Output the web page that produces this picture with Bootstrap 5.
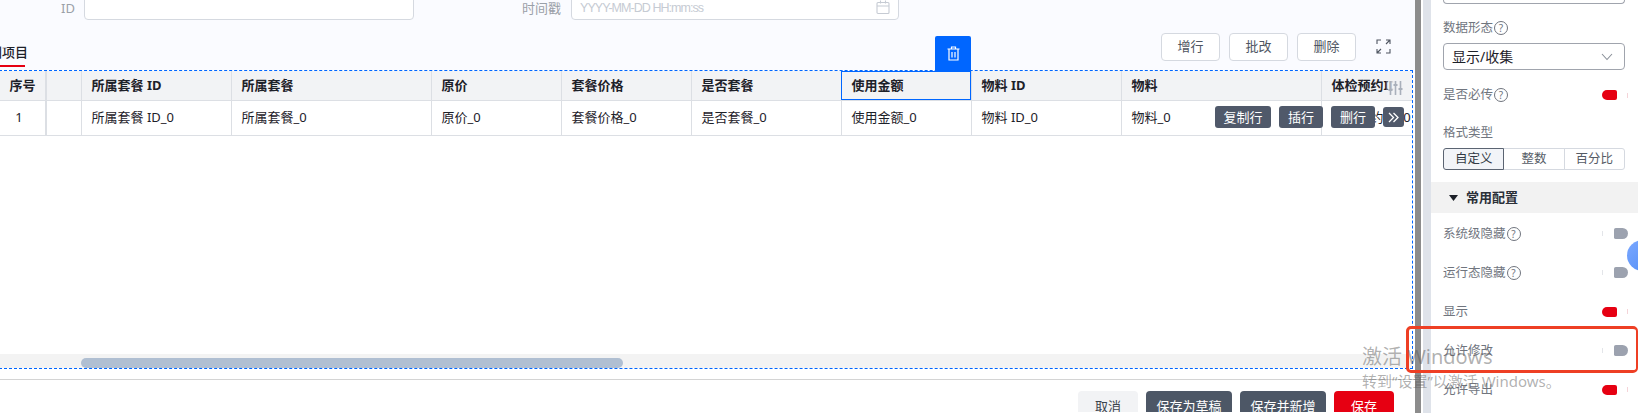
<!DOCTYPE html>
<html lang="zh-CN">
<head>
  <meta charset="UTF-8">
  <title>表单设计</title>
  <link href="https://cdn.jsdelivr.net/npm/bootstrap@5.3.0/dist/css/bootstrap.min.css" rel="stylesheet">
  <style>
    html, body { height: 413px; overflow: hidden; }
    body { font-family: "Noto Sans", "Noto Sans CJK SC", sans-serif; font-size: 13px; color: #1d2129; background: #fff; position: relative; }
    .page-wrap { height: 413px; overflow: hidden; }
    .main-area { width: 1415px; flex: none; position: relative; }
    .form-top { height: 70px; background: #fafbff; }
    .form-fields { height: 20px; overflow: hidden; align-items: flex-end; }
    .field-label { color: #9aa0a8; font-size: 13px; line-height: 16px; padding-bottom: 4px; text-align: right; }
    .field-label.lbl-id { width: 75px; margin-right: 9px; }
    .field-label.lbl-time { width: 73px; margin-left: 74px; margin-right: 10px; }
    .fake-input { height: 32px; border: 1px solid #d5d9e0; border-radius: 4px; background: #fff; padding: 0 8px; flex: none; }
    .fake-input.w-id { width: 330px; }
    .fake-input.w-time { width: 328px; color: #c6cbd3; font-family: "Liberation Sans", sans-serif; font-size: 12.500px; letter-spacing: -.95px; line-height: 16px; padding-top: 11px; justify-content: space-between; }
    .form-tools { height: 50px; }
    .tab-active { width: 25px; height: 47px; border-bottom: 2px solid #e60012; padding-top: 23px; line-height: 18px; font-weight: 500; display: flex; justify-content: flex-end; }
    .tab-text { white-space: nowrap; flex: none; margin-right: -3px; }
    .tool-btn { width: 59px; height: 28px; padding: 0; font-size: 13px; color: #4e5561; background: #fff; border: 1px solid #d5d9e0; border-radius: 4px; }
    .tool-group { padding-top: 13px; padding-right: 24px; gap: 9px; }
    .expand-ico { margin-left: 11px; margin-top: 6px; }
    .table-frame { border: 1px dashed #0066ff; margin-left: -1px; margin-right: 2px; height: 299px; }
    .table-scroll { height: 283px; overflow: hidden; position: relative; }
    .grid-table { table-layout: fixed; width: 1500px; margin: 0; --bs-table-bg: #fff; font-size: 13px; }
    .grid-table th, .grid-table td { padding: 0 10px; border-bottom: 1px solid #dcdfe4; border-right: 1px solid #dcdfe4; white-space: nowrap; overflow: hidden; vertical-align: middle; color: #1d2129; }
    .grid-table th { height: 29px; --bs-table-bg: #f2f3f5; font-weight: 700; }
    .grid-table td { height: 35px; padding-top: 1px; font-weight: 400; }
    .grid-table .num-col { text-align: center; padding: 0; border-right: 2px solid #dcdfe4; }
    .grid-table td.num-col { padding-right: 7px; }
    .grid-table .cell-picked { outline: 1px solid #0066ff; outline-offset: -1px; }
    .filter-ico { position: absolute; left: 1386px; top: 0; width: 26px; height: 28px; background: linear-gradient(90deg, rgba(242,243,245,.2), #f2f3f5 30%); padding: 6px 0 0 2px; }
    .row-tools { position: absolute; left: 1215px; top: 35px; gap: 8px; }
    .row-btn { height: 22px; padding: 0; font-size: 13px; line-height: 20px; color: #fff; background: #50596a; border: 0; border-radius: 3px; }
    .row-btn.wide { width: 56px; }
    .row-btn.narrow { width: 44px; }
    .row-more { position: absolute; left: 1383px; top: 36px; width: 21px; height: 20px; padding: 0; color: #fff; background: #50596a; border: 0; border-radius: 3px; line-height: 1; }
    .track-bar { height: 14px; background: #f3f3f3; padding: 4px 0 0 81px; }
    .track-thumb { width: 542px; height: 10px; background: #b0bfd2; border-radius: 5px; }
    .picked-del { position: absolute; left: 935px; top: 36px; width: 36px; height: 35px; background: #0066ff; border-radius: 2px 2px 0 0; }
    .foot-bar { margin-top: 10px; border-top: 1px solid #d4d4d4; padding: 11px 21px 0 0; gap: 8px; height: 33px; overflow: hidden; align-items: flex-start; }
    .foot-btn { height: 32px; padding: 0; font-size: 13px; border: 0; border-radius: 4px; color: #fff; flex: none; }
    .foot-cancel { width: 60px; background: #f2f3f5; color: #3d434d; }
    .foot-dark { width: 86px; background: #4d5766; }
    .foot-save { width: 60px; background: #e60012; }
    .gutter-a { width: 6px; background: #8c8c8c; flex: none; }
    .gutter-b { width: 2px; background: #fff; flex: none; }
    .gutter-c { width: 8px; background: #dfe3ea; flex: none; }
    .side-panel { width: 207px; flex: none; padding: 0 13px 0 12px; background: #fff; overflow: hidden; }
    .cut-box { height: 4px; border: 1px solid #a0a4ad; border-top: 0; border-radius: 0 0 4px 4px; }
    .side-label { color: #70757e; font-size: 12.500px; line-height: 16px; }
    .help-dot { display: inline-block; width: 14px; height: 14px; border: 1px solid #70757e; border-radius: 50%; font-size: 10px; line-height: 12px; text-align: center; margin-left: 1px; vertical-align: 0; color: #70757e; }
    .pick-box { height: 27px; margin-top: 7px; border: 1px solid #a0a4ad; border-radius: 4px; padding: 0 11px 0 8px; font-size: 14px; color: #1d2129; }
    .fmt-group { margin-top: 7px; height: 22px; }
    .fmt-btn { flex: 1 1 0; padding: 0; font-size: 12.500px; color: #555b65; background: #fff; border: 1px solid #d5d9e0; border-radius: 0; line-height: 20px; margin-left: -1px; }
    .fmt-btn:first-child { margin-left: 0; border-radius: 3px 0 0 3px; border-color: #5b6472; background: #f2f4f8; color: #333a45; position: relative; }
    .fmt-btn:last-child { border-radius: 0 3px 3px 0; }
    .sect-head { height: 31px; margin: 12px -13px 1px -12px; background: #f2f2f2; padding-left: 18px; font-size: 13px; font-weight: 700; color: #2b3038; gap: 8px; }
    .sw-row { height: 39px; }
    .sw-pad { width: 26px; height: 11px; flex: none; margin-right: -3px; }
    .sw-on { width: 15px; height: 10px; background: #e60012; border-radius: 5px 2px 2px 5px; }
    .sw-off { width: 14px; height: 11px; background: #9ca2af; border-radius: 2px 6px 6px 2px; }
    .sw-spec { width: 1px; height: 5px; background: #f4d4d8; }
    .sw-spec.off { background: #e3e5e9; }
    .float-ball { position: absolute; left: 1627px; top: 240px; width: 32px; height: 31px; border-radius: 50%; background: linear-gradient(135deg, #7ba8ff, #4f8cf5); }
    .mark-box { position: absolute; left: 1406px; top: 326px; width: 232px; height: 47px; border: 3px solid #ee3f24; border-radius: 5px; border-right-width: 2px; }
    .win-mark { position: absolute; left: 1362px; top: 344px; color: rgba(90,90,90,.48); pointer-events: none; }
    .win-mark .big { font-size: 20px; line-height: 26px; }
    .win-mark .tiny { font-size: 15px; line-height: 20px; margin-top: 1px; white-space: nowrap; }
  </style>
</head>
<body>

  <div class="d-flex page-wrap">
    <div class="main-area">
      <div class="form-top">
        <div class="d-flex form-fields">
          <div class="field-label lbl-id">ID</div>
          <div class="fake-input w-id"></div>
          <div class="field-label lbl-time">时间戳</div>
          <div class="fake-input w-time d-flex">
            <span>YYYY-MM-DD HH:mm:ss</span>
            <svg class="cal-ico" width="14" height="15" viewBox="0 0 14 15" fill="none" stroke="#c6cbd3" stroke-width="1.100"><rect x="1" y="2.500" width="12" height="11" rx="1"/><path d="M1 6h12M4.500 .5v3M9.500 .5v3"/></svg>
          </div>
        </div>
        <div class="d-flex justify-content-between form-tools">
          <div class="tab-active"><span class="tab-text">类别项目</span></div>
          <div class="d-flex align-items-start tool-group">
            <button class="btn tool-btn" type="button">增行</button>
            <button class="btn tool-btn" type="button">批改</button>
            <button class="btn tool-btn" type="button">删除</button>
            <svg class="expand-ico" width="15" height="15" viewBox="0 0 15 15" fill="none" stroke="#4e5561" stroke-width="1.100"><path d="M1 5V1h4M10 1h4v4M14 10v4h-4M5 14H1v-4M1.500 13.500l3.500-3.500M13.500 1.500 10 5"/></svg>
          </div>
        </div>
      </div>

      <div class="table-frame">
        <div class="table-scroll">
          <table class="table grid-table">
            <colgroup>
              <col style="width:46px"><col style="width:35px"><col style="width:150px"><col style="width:200px"><col style="width:130px"><col style="width:130px"><col style="width:150px"><col style="width:130px"><col style="width:150px"><col style="width:200px"><col style="width:179px">
            </colgroup>
            <thead>
              <tr>
                <th class="num-col">序号</th><th></th><th>所属套餐 ID</th><th>所属套餐</th><th>原价</th><th>套餐价格</th><th>是否套餐</th><th class="cell-picked">使用金额</th><th>物料 ID</th><th>物料</th><th>体检预约ID</th>
              </tr>
            </thead>
            <tbody>
              <tr>
                <td class="num-col">1</td><td></td><td>所属套餐 ID_0</td><td>所属套餐_0</td><td>原价_0</td><td>套餐价格_0</td><td>是否套餐_0</td><td>使用金额_0</td><td>物料 ID_0</td><td>物料_0</td><td>体检预约ID_0</td>
              </tr>
            </tbody>
          </table>
          <div class="filter-ico">
            <svg width="15" height="16" viewBox="0 0 15 16" fill="none" stroke="#a9b0bb" stroke-width="1.600"><path d="M2.500 1v14M7.500 1v14M12.500 1v14"/><path d="M.5 10h4M5.500 5h4M10.500 9h4" stroke-width="2"/></svg>
          </div>
          <div class="d-flex row-tools">
            <button class="btn row-btn wide" type="button">复制行</button>
            <button class="btn row-btn narrow" type="button">插行</button>
            <button class="btn row-btn narrow" type="button">删行</button>
          </div>
          <button class="btn row-more d-flex align-items-center justify-content-center" type="button">
            <svg width="13" height="11" viewBox="0 0 13 11" fill="none" stroke="#fff" stroke-width="1.300"><path d="M2 1l4.500 4.500L2 10M6.500 1 11 5.500 6.500 10"/></svg>
          </button>
        </div>
        <div class="track-bar"><div class="track-thumb"></div></div>
      </div>

      <div class="picked-del d-flex align-items-center justify-content-center">
        <svg width="13" height="15" viewBox="0 0 13 15" fill="none" stroke="#fff" stroke-width="1.200"><path d="M.5 3h12M4.500 3V1h4v2M2 3v11h9V3M5 6v5.500M8 6v5.500"/></svg>
      </div>

      <div class="d-flex justify-content-end foot-bar">
        <button class="btn foot-btn foot-cancel" type="button">取消</button>
        <button class="btn foot-btn foot-dark" type="button">保存为草稿</button>
        <button class="btn foot-btn foot-dark" type="button">保存并新增</button>
        <button class="btn foot-btn foot-save" type="button">保存</button>
      </div>
    </div>

    <div class="gutter-a"></div>
    <div class="gutter-b"></div>
    <div class="gutter-c"></div>

    <div class="side-panel">
      <div class="cut-box"></div>
      <div class="side-label" style="margin-top:16px">数据形态<span class="help-dot">?</span></div>
      <div class="pick-box d-flex align-items-center justify-content-between">
        <span>显示/收集</span>
        <svg width="12" height="8" viewBox="0 0 12 8" fill="none" stroke="#8a9099" stroke-width="1.100"><path d="M1 1l5 5.500L11 1"/></svg>
      </div>
      <div class="d-flex justify-content-between align-items-center side-label" style="margin-top:17px;height:16px">
        <span>是否必传<span class="help-dot">?</span></span>
        <span class="d-flex align-items-center justify-content-between sw-pad"><span class="sw-on"></span><span class="sw-spec"></span></span>
      </div>
      <div class="side-label" style="margin-top:22px">格式类型</div>
      <div class="d-flex fmt-group">
        <button class="btn fmt-btn" type="button">自定义</button>
        <button class="btn fmt-btn" type="button">整数</button>
        <button class="btn fmt-btn" type="button">百分比</button>
      </div>
      <div class="sect-head d-flex align-items-center">
        <svg width="9" height="6" viewBox="0 0 9 6" fill="#1d2129"><path d="M0 0h9L4.500 6z"/></svg>
        <span>常用配置</span>
      </div>
      <div class="d-flex justify-content-between align-items-center side-label sw-row">
        <span>系统级隐藏<span class="help-dot">?</span></span>
        <span class="d-flex align-items-center justify-content-between sw-pad"><span class="sw-spec off"></span><span class="sw-off"></span></span>
      </div>
      <div class="d-flex justify-content-between align-items-center side-label sw-row">
        <span>运行态隐藏<span class="help-dot">?</span></span>
        <span class="d-flex align-items-center justify-content-between sw-pad"><span class="sw-spec off"></span><span class="sw-off"></span></span>
      </div>
      <div class="d-flex justify-content-between align-items-center side-label sw-row">
        <span>显示</span>
        <span class="d-flex align-items-center justify-content-between sw-pad"><span class="sw-on"></span><span class="sw-spec"></span></span>
      </div>
      <div class="d-flex justify-content-between align-items-center side-label sw-row">
        <span>允许修改</span>
        <span class="d-flex align-items-center justify-content-between sw-pad"><span class="sw-spec off"></span><span class="sw-off"></span></span>
      </div>
      <div class="d-flex justify-content-between align-items-center side-label sw-row">
        <span>允许导出</span>
        <span class="d-flex align-items-center justify-content-between sw-pad"><span class="sw-on"></span><span class="sw-spec"></span></span>
      </div>
    </div>
  </div>

  <div class="float-ball"></div>
  <div class="mark-box"></div>
  <div class="win-mark">
    <div class="big">激活 Windows</div>
    <div class="tiny">转到“设置”以激活 Windows。</div>
  </div>

  <script src="https://cdn.jsdelivr.net/npm/bootstrap@5.3.0/dist/js/bootstrap.bundle.min.js"></script>
</body>
</html>
